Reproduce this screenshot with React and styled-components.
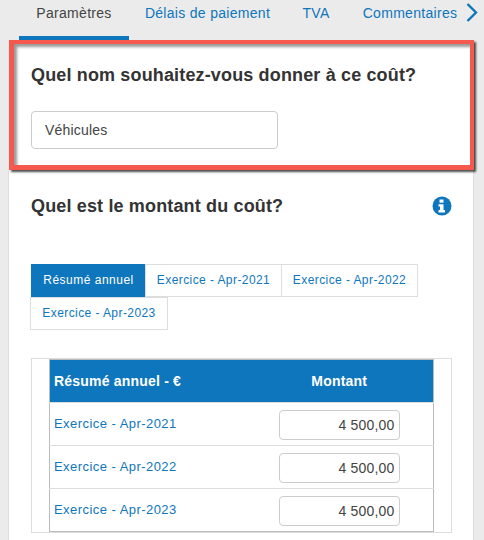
import React from 'react';
import styled, { createGlobalStyle } from 'styled-components';

const Global = createGlobalStyle`
  html, body {
    margin: 0;
    padding: 0;
    background: #ebebeb;
  }
  * { box-sizing: border-box; }
`;

const Page = styled.div`
  width: 484px;
  height: 540px;
  overflow: hidden;
  background: #ebebeb;
  font-family: 'Liberation Sans', Arial, sans-serif;
  color: #333;
`;

const TabBar = styled.nav`
  display: flex;
  height: 40px;
  padding-left: 19px;
`;

const Tab = styled.a`
  width: ${p => p.$w}px;
  height: 40px;
  padding-top: 5px;
  font-size: 14px;
  line-height: 16px;
  letter-spacing: 0.3px;
  text-align: center;
  white-space: nowrap;
  color: ${p => (p.$active ? '#444' : '#0e76bc')};
  border-bottom: 4px solid ${p => (p.$active ? '#0e76bc' : 'transparent')};
`;

const Arrow = styled.svg`
  flex: none;
  width: 12px;
  height: 20px;
  margin: 3px 0 0 -8px;
`;

const Highlight = styled.section`
  width: 465px;
  height: 130px;
  margin-left: 9px;
  padding: 20px 0 0 17px;
  background: #fff;
  border: solid #f5594d;
  border-width: 4px 4px 5px 5px;
  box-shadow: 2px 2px 2px rgba(0, 0, 0, 0.7), inset 3px 3px 3px rgba(0, 0, 0, 0.4);
  position: relative;
`;

const Title = styled.h2`
  margin: 0;
  font-size: 18px;
  line-height: 22px;
  font-weight: 700;
  letter-spacing: 0.15px;
  color: #333;
`;

const NameInput = styled.div`
  width: 247px;
  height: 38px;
  margin-top: 25px;
  padding: 0 13px;
  font-size: 14px;
  line-height: 36px;
  letter-spacing: 0.2px;
  color: #444;
  border: 1px solid #ccc;
  border-radius: 4px;
`;

const Card = styled.section`
  width: 466px;
  height: 370px;
  margin-left: 8px;
  padding: 25px 23px 0 22px;
  background: #fff;
  border-left: 1px solid #ddd;
  border-right: 1px solid #ddd;
`;

const TitleRow = styled.div`
  display: flex;
  justify-content: space-between;
`;

const Info = styled.svg`
  width: 20px;
  height: 20px;
  margin: 1px -2px 0 0;
`;

const Pills = styled.div`
  display: flex;
  flex-wrap: wrap;
  width: 400px;
  margin-top: 47px;
`;

const Pill = styled.a`
  height: 33px;
  width: ${p => p.$w}px;
  margin: 0 -1px 0 0;
  font-size: 12px;
  line-height: 31px;
  letter-spacing: ${p => (p.$active ? '0.5px' : '0.42px')};
  text-align: center;
  white-space: nowrap;
  color: ${p => (p.$active ? '#fff' : '#0e76bc')};
  background: ${p => (p.$active ? '#0e76bc' : '#fff')};
  border: 1px solid ${p => (p.$active ? '#0e76bc' : '#ddd')};
  ${p => p.$wrapped && 'margin-left: -1px;'}
`;

const TableWrap = styled.div`
  width: 421px;
  height: 175px;
  margin-top: 28px;
  padding: 0 17px;
  border: 1px solid #ddd;
`;

const Table = styled.table`
  width: 385px;
  border-collapse: collapse;
  table-layout: fixed;
  border: 1px solid #bbb;
  font-size: 13px;
`;

const HeadCell = styled.th`
  height: 43px;
  padding: ${p => (p.$amount ? '0 33px 0 4px' : '0 4px')};
  background: #0e76bc;
  color: #fff;
  font-size: 14px;
  font-weight: 700;
  letter-spacing: 0.2px;
  text-align: ${p => (p.$amount ? 'center' : 'left')};
`;

const Cell = styled.td`
  height: 43px;
  padding: 0 4px;
  border-top: 1px solid #ddd;
  vertical-align: middle;
`;

const RowLink = styled.a`
  display: block;
  margin-top: -2px;
  font-size: 13px;
  letter-spacing: 0.45px;
  color: #0e76bc;
`;

const Amount = styled.div`
  width: 121px;
  height: 30px;
  margin-top: 1px;
  padding: 0 4px;
  font-size: 14px;
  line-height: 28px;
  letter-spacing: 0.2px;
  text-align: right;
  color: #444;
  background: #fff;
  border: 1px solid #ccc;
  border-radius: 4px;
`;

const rows = ['Exercice - Apr-2021', 'Exercice - Apr-2022', 'Exercice - Apr-2023'];

export default function App() {
  return (
    <Page>
      <Global />
      <TabBar>
        <Tab $active $w={110}>Paramètres</Tab>
        <Tab $w={157}>Délais de paiement</Tab>
        <Tab $w={60}>TVA</Tab>
        <Tab $w={128}>Commentaires</Tab>
        <Arrow viewBox="0 0 12 20">
          <path d="M1.5 1 L10 9.5 L1.5 18" fill="none" stroke="#0e76bc" strokeWidth="2.4" />
        </Arrow>
      </TabBar>
      <Highlight>
        <Title>Quel nom souhaitez-vous donner à ce coût?</Title>
        <NameInput>Véhicules</NameInput>
      </Highlight>
      <Card>
        <TitleRow>
          <Title>Quel est le montant du coût?</Title>
          <Info viewBox="0 0 20 20">
            <circle cx="10" cy="10" r="9.5" fill="#0e76bc" />
            <rect x="7.5" y="3.5" width="4" height="3.2" fill="#fff" />
            <path d="M6.5 8.2 H11.5 V14 H13 V16.5 H6.5 V14 H8 V10.6 H6.5 Z" fill="#fff" />
          </Info>
        </TitleRow>
        <Pills>
          <Pill $active $w={115}>Résumé annuel</Pill>
          <Pill $w={137}>Exercice - Apr-2021</Pill>
          <Pill $w={137}>Exercice - Apr-2022</Pill>
          <Pill $wrapped $w={138}>Exercice - Apr-2023</Pill>
        </Pills>
        <TableWrap>
          <Table>
            <colgroup>
              <col style={{ width: 225 }} />
              <col />
            </colgroup>
            <thead>
              <tr>
                <HeadCell>Résumé annuel - €</HeadCell>
                <HeadCell $amount>Montant</HeadCell>
              </tr>
            </thead>
            <tbody>
              {rows.map(r => (
                <tr key={r}>
                  <Cell><RowLink>{r}</RowLink></Cell>
                  <Cell><Amount>4 500,00</Amount></Cell>
                </tr>
              ))}
            </tbody>
          </Table>
        </TableWrap>
      </Card>
    </Page>
  );
}
